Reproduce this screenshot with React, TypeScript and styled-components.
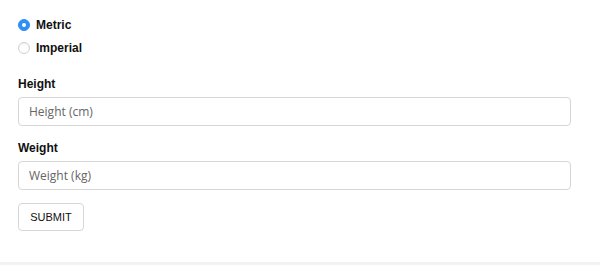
import React, { useState } from "react";
import styled, { createGlobalStyle } from "styled-components";

const Global = createGlobalStyle`
  html, body { margin: 0; padding: 0; background: #f3f3f3; }
  body { font-family: "Liberation Sans", Arial, sans-serif; color: #111; }
  * { box-sizing: border-box; }
`;

const Page = styled.div`
  height: 262px;
  background: #fff;
  padding: 13px 29px 0 18px;
`;

const RadioGroup = styled.div`
  display: flex;
  flex-direction: column;
  margin-bottom: 18px;
`;

const RadioRow = styled.label`
  display: flex;
  align-items: center;
  gap: 6px;
  height: 23px;
  font-size: 12px;
  line-height: 14px;
  font-weight: 700;
  color: #111;
  cursor: pointer;
`;

const RadioDot = styled.span<{ $checked: boolean }>`
  width: 12px;
  height: 12px;
  border-radius: 50%;
  flex: none;
  display: flex;
  align-items: center;
  justify-content: center;
  background: ${(p) => (p.$checked ? "#2f8ff7" : "#fff")};
  border: 1px solid ${(p) => (p.$checked ? "#2f8ff7" : "#cfcfcf")};
  box-shadow: ${(p) => (p.$checked ? "none" : "inset 0 1px 1px rgba(0,0,0,0.06)")};
  &::after {
    content: "";
    display: ${(p) => (p.$checked ? "block" : "none")};
    width: 4px;
    height: 4px;
    border-radius: 50%;
    background: #fff;
  }
`;

const Field = styled.div`
  display: flex;
  flex-direction: column;
  margin-bottom: 15px;
`;

const Label = styled.label`
  font-size: 12px;
  line-height: 14px;
  font-weight: 700;
  margin-bottom: 6px;
  color: #111;
`;

const Input = styled.input`
  width: 100%;
  height: 29px;
  border: 1px solid #d6d6d6;
  border-radius: 4px;
  padding: 0 10px;
  font-family: "Open Sans", sans-serif;
  font-size: 12px;
  color: #333;
  background: #fff;
  outline: none;
  &::placeholder { color: #666; }
`;

const Submit = styled.button`
  margin-top: -2px;
  width: 66px;
  height: 28px;
  border: 1px solid #d6d6d6;
  border-radius: 4px;
  background: #fff;
  font-family: "Liberation Sans", Arial, sans-serif;
  font-size: 11px;
  color: #111;
  padding: 0;
  cursor: pointer;
`;

export default function App() {
  const [unit, setUnit] = useState<"metric" | "imperial">("metric");
  return (
    <>
      <Global />
      <Page>
        <RadioGroup>
          <RadioRow onClick={() => setUnit("metric")}>
            <RadioDot $checked={unit === "metric"} />
            Metric
          </RadioRow>
          <RadioRow onClick={() => setUnit("imperial")}>
            <RadioDot $checked={unit === "imperial"} />
            Imperial
          </RadioRow>
        </RadioGroup>
        <Field>
          <Label>Height</Label>
          <Input placeholder={unit === "metric" ? "Height (cm)" : "Height (in)"} />
        </Field>
        <Field>
          <Label>Weight</Label>
          <Input placeholder={unit === "metric" ? "Weight (kg)" : "Weight (lb)"} />
        </Field>
        <Submit type="button">SUBMIT</Submit>
      </Page>
    </>
  );
}
